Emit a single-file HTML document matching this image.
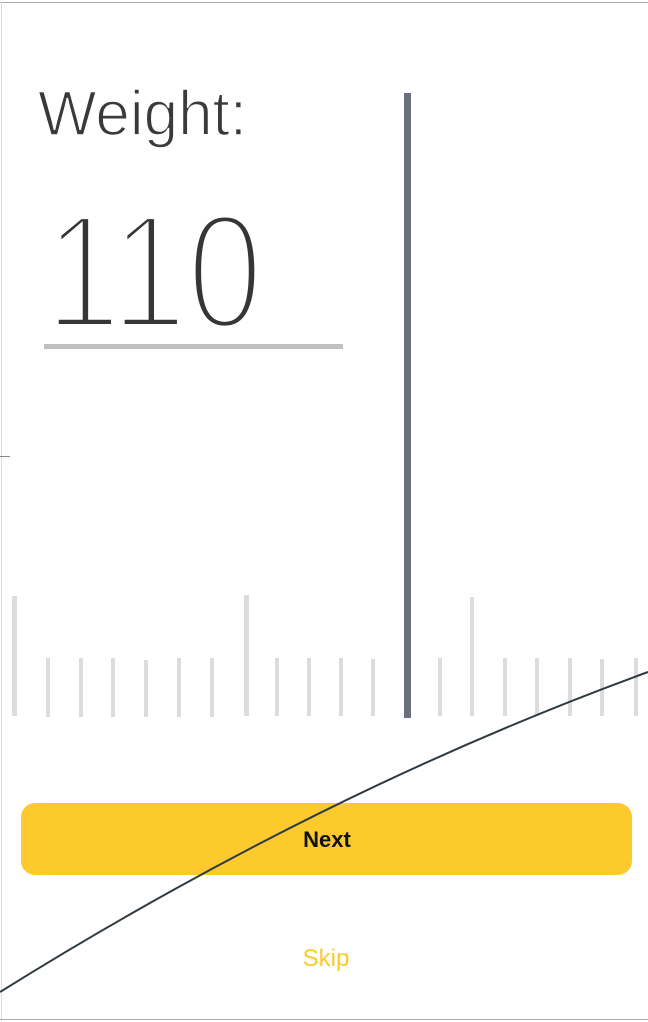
<!DOCTYPE html>
<html><head><meta charset="utf-8"><style>
html,body{margin:0;padding:0;background:#fff;width:648px;height:1022px;overflow:hidden}
svg{display:block}
</style></head><body>
<svg width="648" height="1022" viewBox="0 0 648 1022" xmlns="http://www.w3.org/2000/svg" font-family="Liberation Sans, sans-serif">
<rect x="0" y="0" width="648" height="1022" fill="#fff"/>
<rect x="0" y="2" width="648" height="1" fill="#aaa"/>
<rect x="1" y="2" width="1" height="1019" fill="#ddd"/>
<rect x="0" y="1019" width="648" height="1" fill="#aaa"/>
<rect x="0" y="456" width="10" height="1" fill="#888"/>
<text x="38" y="135" font-size="63" fill="#3a3a3a" stroke="#fff" stroke-width="1.6" paint-order="normal" textLength="209" lengthAdjust="spacingAndGlyphs">Weight:</text>
<text x="45" y="328" font-size="164" fill="#363636" stroke="#fff" stroke-width="8" textLength="218" lengthAdjust="spacingAndGlyphs">110</text>
<rect x="44" y="344" width="299" height="5" fill="#c0c0c0"/>
<g fill="#dcdcdc">
<rect x="12" y="596" width="5" height="120"/>
<rect x="46" y="658" width="4" height="59"/>
<rect x="79" y="658" width="4" height="59"/>
<rect x="111" y="658" width="4" height="59"/>
<rect x="144" y="660" width="4" height="57"/>
<rect x="177" y="658" width="4" height="59"/>
<rect x="210" y="658" width="4" height="59"/>
<rect x="244" y="595" width="5" height="121"/>
<rect x="275" y="658" width="4" height="58"/>
<rect x="307" y="658" width="4" height="58"/>
<rect x="339" y="658" width="4" height="58"/>
<rect x="371" y="659" width="4" height="57"/>
<rect x="438" y="658" width="4" height="58"/>
<rect x="470" y="597" width="4" height="119"/>
<rect x="503" y="658" width="4" height="58"/>
<rect x="535" y="658" width="4" height="58"/>
<rect x="568" y="658" width="4" height="58"/>
<rect x="600" y="659" width="4" height="57"/>
<rect x="634" y="658" width="4" height="58"/>
</g>
<rect x="404" y="93" width="7" height="625" fill="#6a6f7b"/>
<rect x="21" y="803" width="611" height="72" rx="14" fill="#fdca2e"/>
<text x="327" y="847" font-size="22" font-weight="bold" fill="#111" text-anchor="middle">Next</text>
<text x="326" y="966" font-size="24" fill="#fdca2e" text-anchor="middle">Skip</text>
<path d="M0 992 Q324 790 648 672" fill="none" stroke="#2f3b40" stroke-width="2"/>
</svg>
</body></html>
